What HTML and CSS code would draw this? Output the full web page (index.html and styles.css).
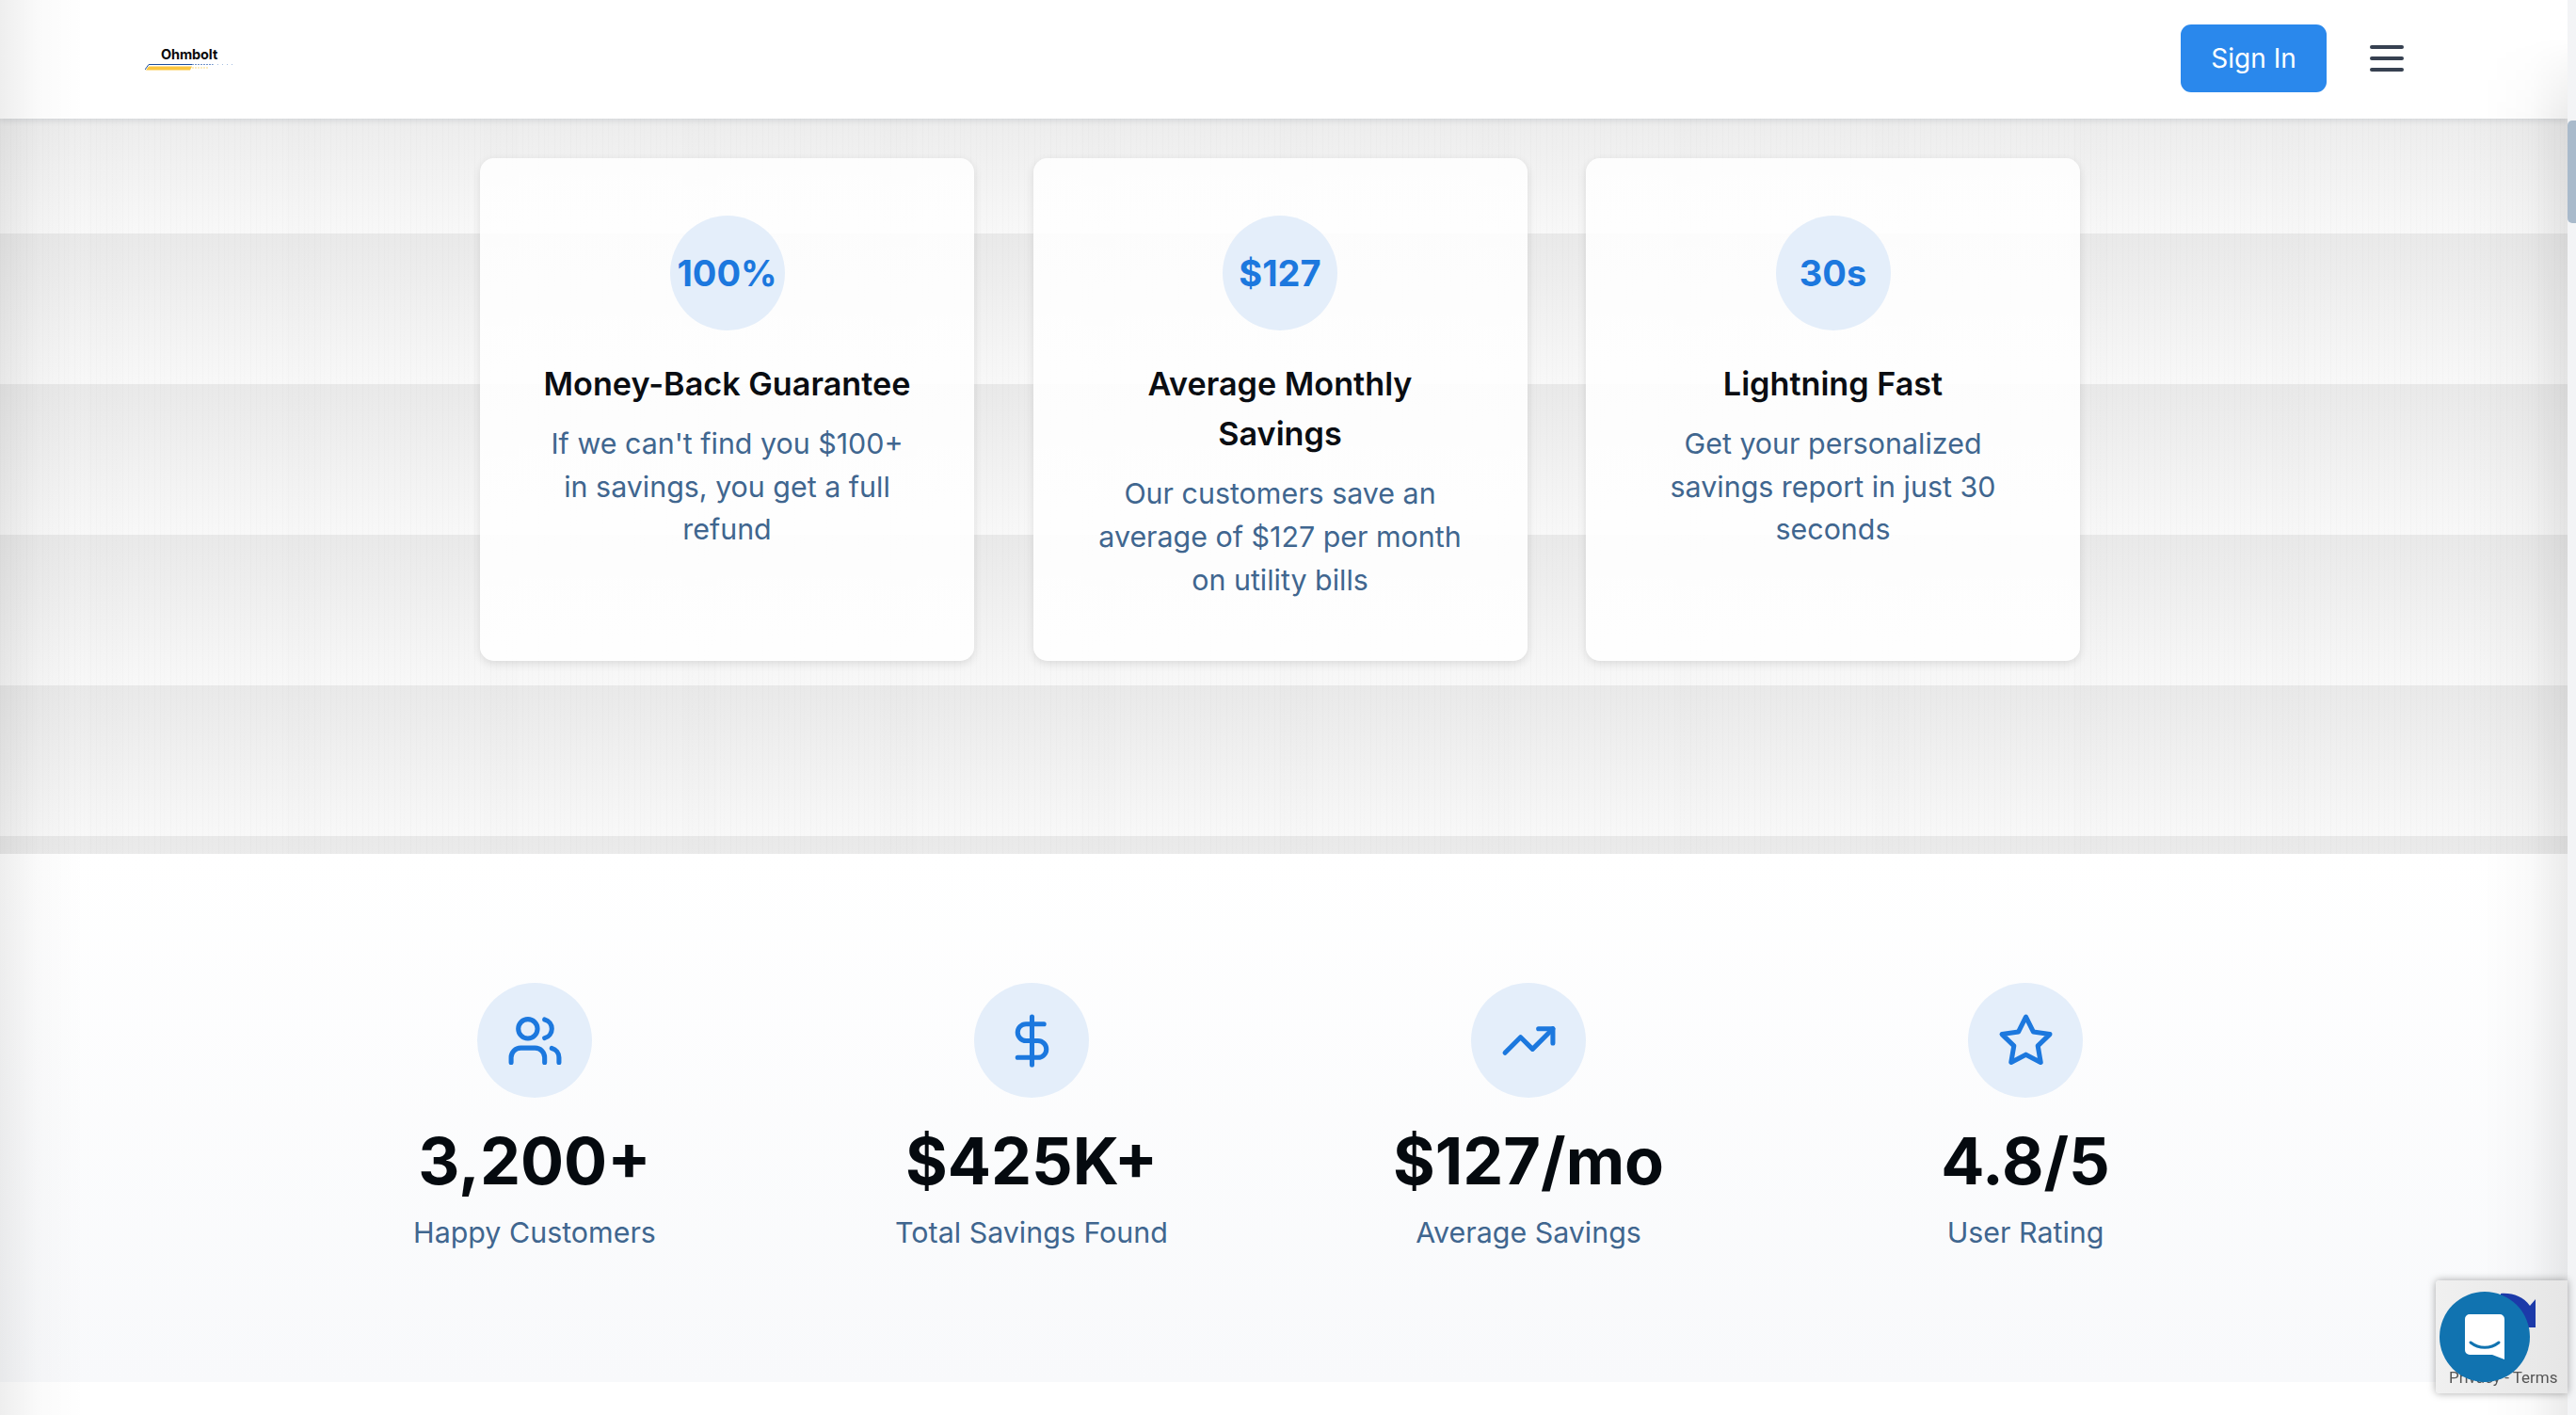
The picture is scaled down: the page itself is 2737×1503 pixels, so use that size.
FILE: index.html
```html
<!DOCTYPE html>
<html lang="en">
<head>
  <meta charset="UTF-8">
  <meta name="viewport" content="width=device-width, initial-scale=1.0">
  <title>Ohmbolt</title>
  <link rel="stylesheet" href="styles.css">
</head>
<body>
  <div class="page">
    <main class="content">
      <header class="topbar">
        <a class="logo" href="#">
          <span class="logo-name">Ohmbolt</span>
          <svg class="logo-lines" viewBox="0 0 94 8" aria-hidden="true">
            <path d="M0 7 L4 1.5 H50" fill="none" stroke="#1d4f9f" stroke-width="1"/>
            <path d="M50 1.5 H72" fill="none" stroke="#6f92c8" stroke-width="1" stroke-dasharray="2 1"/>
            <path d="M72 1.5 H93" fill="none" stroke="#a5bde0" stroke-width="1" stroke-dasharray="1 4"/>
            <path d="M1 7.5 L4 3.5 H50 L48 7.5 Z" fill="#fcc63f"/>
            <path d="M50 5 H68" fill="none" stroke="#fde6a8" stroke-width="1.5" stroke-dasharray="2 1"/>
          </svg>
        </a>
        <div class="topbar-actions">
          <button class="signin">Sign In</button>
          <button class="menu" aria-label="Menu"><span></span><span></span><span></span></button>
        </div>
      </header>

      <section class="hero">
        <div class="cards">
          <article class="card">
            <div class="badge">100%</div>
            <h3>Money-Back Guarantee</h3>
            <p>If we can't find you $100+ in savings, you get a full refund</p>
          </article>
          <article class="card">
            <div class="badge">$127</div>
            <h3>Average Monthly Savings</h3>
            <p>Our customers save an average of $127 per month on utility bills</p>
          </article>
          <article class="card">
            <div class="badge">30s</div>
            <h3>Lightning Fast</h3>
            <p>Get your personalized savings report in just 30 seconds</p>
          </article>
        </div>
      </section>

      <section class="stats">
        <div class="stats-grid">
          <div class="stat">
            <div class="badge">
              <svg viewBox="0 0 24 24"><path d="M16 21v-2a4 4 0 0 0-4-4H6a4 4 0 0 0-4 4v2"/><circle cx="9" cy="7" r="4"/><path d="M22 21v-2a4 4 0 0 0-3-3.87"/><path d="M16 3.13a4 4 0 0 1 0 7.75"/></svg>
            </div>
            <div class="stat-value">3,200+</div>
            <div class="stat-label">Happy Customers</div>
          </div>
          <div class="stat">
            <div class="badge">
              <svg viewBox="0 0 24 24"><path d="M12 2v20"/><path d="M17 5H9.5a3.5 3.5 0 0 0 0 7h5a3.5 3.5 0 0 1 0 7H6"/></svg>
            </div>
            <div class="stat-value">$425K+</div>
            <div class="stat-label">Total Savings Found</div>
          </div>
          <div class="stat">
            <div class="badge">
              <svg viewBox="0 0 24 24"><path d="M22 7l-8.5 8.5-5-5L2 17"/><path d="M16 7h6v6"/></svg>
            </div>
            <div class="stat-value">$127/mo</div>
            <div class="stat-label">Average Savings</div>
          </div>
          <div class="stat">
            <div class="badge">
              <svg viewBox="0 0 24 24"><path d="M12 2l3.09 6.26L22 9.27l-5 4.87 1.18 6.88L12 17.77l-6.18 3.25L7 14.14 2 9.27l6.91-1.01z"/></svg>
            </div>
            <div class="stat-value">4.8/5</div>
            <div class="stat-label">User Rating</div>
          </div>
        </div>
      </section>

      <div class="next-section"></div>
    </main>

    <div class="scrollbar"><div class="scrollbar-thumb"></div></div>
  </div>

  <div class="recaptcha">
    <svg class="recaptcha-arrow" viewBox="0 0 38 38" aria-hidden="true">
      <path d="M0 1 C12 0 24 4 31 14 L37 7 V37 H0 Z" fill="#1c3aa9"/>
    </svg>
    <div class="recaptcha-links">Privacy - Terms</div>
  </div>

  <button class="chat" aria-label="Open chat">
    <svg viewBox="0 0 42 48" aria-hidden="true">
      <path d="M5 0 H37 A5 5 0 0 1 42 5 V48 L29 43 H5 A5 5 0 0 1 0 38 V5 A5 5 0 0 1 5 0 Z" fill="#fff"/>
      <path d="M6 30 C15 37 27 37 36 30" fill="none" stroke="#1173b0" stroke-width="3" stroke-linecap="round"/>
    </svg>
  </button>
</body>
</html>
```

FILE: styles.css
```css
* {
  box-sizing: border-box;
}
html, body {
  margin: 0;
  height: 100%;
  overflow: hidden;
}
body {
  font-family: Inter, "Liberation Sans", sans-serif;
  background: #fff;
}
button {
  font-family: inherit;
  border: none;
  cursor: pointer;
}
.page {
  display: flex;
  height: 100vh;
}
.content {
  position: relative;
  flex: 1;
  min-width: 0;
  overflow: hidden;
}
/* soft grey fade down both page edges */
.content::before,
.content::after {
  content: "";
  position: absolute;
  top: 0;
  bottom: 0;
  width: 90px;
  z-index: 5;
  pointer-events: none;
}
.content::before {
  left: 0;
  background: linear-gradient(to right, rgba(0, 0, 0, .065), rgba(0, 0, 0, .02) 45%, transparent);
}
.content::after {
  right: 0;
  background: linear-gradient(to left, rgba(0, 0, 0, .08), rgba(0, 0, 0, .02) 45%, transparent);
  -webkit-mask-image: linear-gradient(to bottom, transparent 40px, #000 130px);
  mask-image: linear-gradient(to bottom, transparent 40px, #000 130px);
}

/* top bar */
.topbar {
  position: relative;
  z-index: 2;
  display: flex;
  align-items: center;
  justify-content: space-between;
  height: 126px;
  padding: 0 174px 0 154px;
  background: #fff;
  box-shadow: 0 2px 6px rgba(30, 50, 70, .12);
}
.logo {
  display: flex;
  flex-direction: column;
  align-items: center;
  width: 94px;
  margin-bottom: 2px;
  text-decoration: none;
}
.logo-name {
  font-size: 14.5px;
  line-height: 15px;
  font-weight: 700;
  color: #0a0a0a;
  letter-spacing: -.1px;
}
.logo-lines {
  display: block;
  width: 94px;
  height: 8px;
  margin-top: 2px;
}
.topbar-actions {
  display: flex;
  align-items: center;
  gap: 46px;
  margin-bottom: 2px;
}
.signin {
  width: 155px;
  height: 72px;
  border-radius: 11px;
  background: #2a88ec;
  color: #fff;
  font-size: 28px;
}
.menu {
  display: flex;
  flex-direction: column;
  gap: 8px;
  width: 36px;
  padding: 0;
  background: none;
}
.menu span {
  height: 4px;
  border-radius: 2px;
  background: #374151;
}

/* striped hero band */
.hero {
  height: 781px;
  padding: 42px 8px 0 0;
  background:
    repeating-linear-gradient(to right, rgba(0, 0, 0, .012) 0 1px, transparent 1px 4px, rgba(0, 0, 0, .008) 4px 5px, transparent 5px 11px, rgba(0, 0, 0, .014) 11px 12px, transparent 12px 17px),
    repeating-linear-gradient(to right, transparent 0 93px, rgba(0, 0, 0, .004) 93px 129px, transparent 129px 211px),
    linear-gradient(to bottom, #e9e9e9, #f8f8f8) 0 122px / 100% 160px;
}
.cards {
  display: grid;
  grid-template-columns: repeat(3, 525px);
  justify-content: center;
  gap: 62.5px;
}
.card {
  height: 534px;
  padding: 61px 61px 0;
  border-radius: 15px;
  background: linear-gradient(to bottom, rgba(255, 255, 255, .88), rgba(255, 255, 255, .92));
  box-shadow: 0 3px 10px rgba(0, 0, 0, .11);
  text-align: center;
}
.card h3 {
  margin: 0 0 15px;
  font-size: 34.2px;
  line-height: 53.2px;
  font-weight: 600;
  color: #0a0d12;
}
.card p {
  margin: 0;
  font-size: 30.4px;
  line-height: 45.6px;
  color: #40668f;
}
.badge {
  display: flex;
  align-items: center;
  justify-content: center;
  width: 122px;
  height: 122px;
  margin: 0 auto 30px;
  border-radius: 50%;
  background: #e4eefa;
  color: #1c78de;
  font-size: 38px;
  font-weight: 700;
}
.badge svg {
  width: 61px;
  height: 61px;
  fill: none;
  stroke: currentColor;
  stroke-width: 2;
  stroke-linecap: round;
  stroke-linejoin: round;
}

/* numbers row */
.stats {
  height: 561px;
  padding: 137px 8px 0 0;
  background: linear-gradient(to bottom, #fff, #f8f9fb);
}
.stats-grid {
  display: grid;
  grid-template-columns: repeat(4, 528px);
  justify-content: center;
}
.stat {
  text-align: center;
}
.stat-value {
  margin-bottom: 15px;
  font-size: 68.4px;
  line-height: 75px;
  font-weight: 700;
  color: #050a0f;
}
.stat-label {
  font-size: 30.4px;
  line-height: 46px;
  color: #40668f;
}
.next-section {
  height: 35px;
  background: #fff;
}

/* scrollbar strip */
.scrollbar {
  flex: 0 0 9px;
  padding-top: 128px;
  background: #f3f4f6;
}
.scrollbar-thumb {
  height: 109px;
  border-radius: 5px 0 0 5px;
  background: #a9bacb;
}

/* floating widgets */
.recaptcha {
  position: fixed;
  left: 2588px;
  top: 1360px;
  width: 140px;
  height: 120px;
  border-radius: 4px 0 0 4px;
  background: linear-gradient(to right, #f0f0f0, #e6e6e6);
  box-shadow: 0 0 8px rgba(0, 0, 0, .35);
  z-index: 8;
}
.recaptcha-arrow {
  position: absolute;
  left: 69px;
  top: 13px;
  width: 38px;
  height: 38px;
}
.recaptcha-links {
  position: absolute;
  left: 14px;
  top: 92px;
  font-family: Roboto, "Liberation Sans", sans-serif;
  font-size: 17px;
  line-height: 22px;
  color: #555;
  white-space: nowrap;
}
.chat {
  position: fixed;
  left: 2592px;
  top: 1372px;
  display: flex;
  align-items: center;
  justify-content: center;
  width: 96px;
  height: 96px;
  padding: 0;
  border-radius: 50%;
  background: #1173b0;
  z-index: 9;
}
.chat svg {
  display: block;
  width: 42px;
  height: 48px;
}
```
